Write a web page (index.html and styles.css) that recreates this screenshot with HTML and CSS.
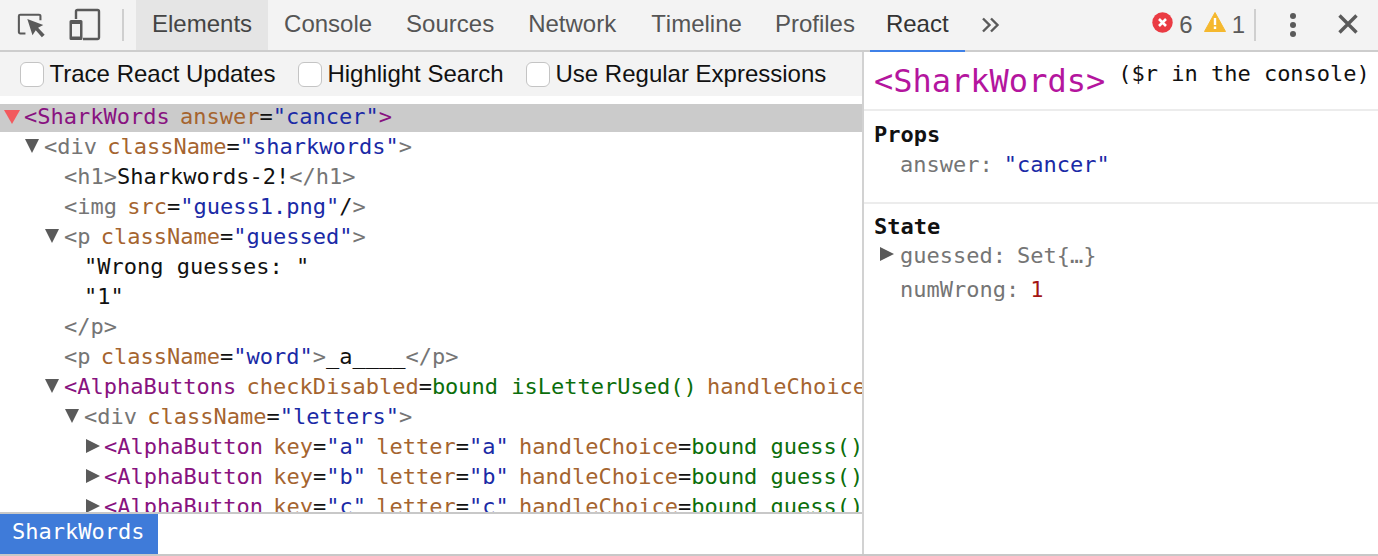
FILE: index.html
```html
<!DOCTYPE html>
<html lang="en">
<head>
<meta charset="utf-8">
<title>DevTools React</title>
<link rel="stylesheet" href="styles.css">
</head>
<body>
<header class="toolbar">
  <button class="tool tool-inspect" aria-label="Inspect">
    <svg width="32" height="32" viewBox="0 0 32 32"><path d="M9 25H3.500A1.500 1.500 0 0 1 2 23.500V6.500A1.500 1.500 0 0 1 3.500 5H23.500A1.500 1.500 0 0 1 25 6.500V11" fill="none" stroke="#5a5a5a" stroke-width="2.200"/><path d="M11 9.500L28 16L22.500 19L29.500 26.500L26.500 29L20 21.500L16.500 27Z" fill="#5a5a5a"/></svg>
  </button>
  <button class="tool tool-device" aria-label="Device">
    <svg width="32" height="34" viewBox="0 0 32 34"><path d="M7 11V3.500A1.500 1.500 0 0 1 8.500 2H28.500A1.500 1.500 0 0 1 30 3.500V29.500A1.500 1.500 0 0 1 28.500 31H14" fill="none" stroke="#5a5a5a" stroke-width="2.400"/><path fill-rule="evenodd" d="M2 12H12A1.500 1.500 0 0 1 13.500 13.500V30.500A1.500 1.500 0 0 1 12 32H2A1.500 1.500 0 0 1 .5 30.500V13.500A1.500 1.500 0 0 1 2 12ZM3 16V28.500H11V16Z" fill="#5a5a5a"/></svg>
  </button>
  <span class="sep"></span>
  <nav class="tabs">
    <span class="tab tab-current">Elements</span>
    <span class="tab tab-console">Console</span>
    <span class="tab">Sources</span>
    <span class="tab tab-network">Network</span>
    <span class="tab">Timeline</span>
    <span class="tab tab-profiles">Profiles</span>
    <span class="tab tab-active">React</span>
    <span class="more">
      <svg width="20" height="16" viewBox="0 0 20 16"><path d="M2 1.500L8.500 8L2 14.500M10 1.500L16.500 8L10 14.500" fill="none" stroke="#5a5a5a" stroke-width="2.400"/></svg>
    </span>
  </nav>
  <div class="status">
    <svg class="ico-err" width="21" height="21" viewBox="0 0 21 21"><circle cx="10.500" cy="10.500" r="10.200" fill="#ea3b43"/><path d="M7 7L14 14M14 7L7 14" stroke="#fff" stroke-width="2.600"/></svg>
    <span class="count count-err">6</span>
    <svg class="ico-warn" width="22" height="20" viewBox="0 0 22 20"><path d="M11 .5L21.500 19.500H.5Z" fill="#f5b82e" stroke="#f5b82e" stroke-linejoin="round"/><path d="M9.800 6H12.200V13H9.800ZM9.800 14.500H12.200V17H9.800Z" fill="#fff"/></svg>
    <span class="count">1</span>
    <span class="sep sep-status"></span>
    <svg class="ico-dots" width="8" height="26" viewBox="0 0 8 26"><circle cx="4" cy="4" r="3" fill="#5a5a5a"/><circle cx="4" cy="13" r="3" fill="#5a5a5a"/><circle cx="4" cy="22" r="3" fill="#5a5a5a"/></svg>
    <svg class="ico-close" width="20" height="20" viewBox="0 0 20 20"><path d="M1.500 1.500L18.500 18.500M18.500 1.500L1.500 18.500" stroke="#5a5a5a" stroke-width="3.400"/></svg>
  </div>
</header>
<main class="panes">
  <section class="left">
    <div class="options">
      <label class="opt"><span class="box"></span>Trace React Updates</label>
      <label class="opt"><span class="box"></span>Highlight Search</label>
      <label class="opt"><span class="box"></span>Use Regular Expressions</label>
    </div>
    <div class="tree">
      <div class="row row-sel i0"><i class="tri tri-down tri-red"></i><b class="t">&lt;SharkWords</b> <b class="a">answer</b>=<b class="v">"cancer"</b><b class="t">&gt;</b></div>
      <div class="row i1"><i class="tri tri-down"></i><b class="g">&lt;div</b> <b class="a">className</b>=<b class="v">"sharkwords"</b><b class="g">&gt;</b></div>
      <div class="row i2"><b class="g">&lt;h1&gt;</b>Sharkwords-2!<b class="g">&lt;/h1&gt;</b></div>
      <div class="row i2"><b class="g">&lt;img</b> <b class="a">src</b>=<b class="v">"guess1.png"</b>/<b class="g">&gt;</b></div>
      <div class="row i2"><i class="tri tri-down"></i><b class="g">&lt;p</b> <b class="a">className</b>=<b class="v">"guessed"</b><b class="g">&gt;</b></div>
      <div class="row i3 plain">"Wrong guesses: "</div>
      <div class="row i3">"1"</div>
      <div class="row i2"><b class="g">&lt;/p&gt;</b></div>
      <div class="row i2"><b class="g">&lt;p</b> <b class="a">className</b>=<b class="v">"word"</b><b class="g">&gt;</b>_a____<b class="g">&lt;/p&gt;</b></div>
      <div class="row i2"><i class="tri tri-down"></i><b class="t">&lt;AlphaButtons</b> <b class="a">checkDisabled</b>=<b class="f">bound isLetterUsed()</b> <b class="a">handleChoice</b>=<b class="f">bound guess()</b></div>
      <div class="row i3"><i class="tri tri-down"></i><b class="g">&lt;div</b> <b class="a">className</b>=<b class="v">"letters"</b><b class="g">&gt;</b></div>
      <div class="row i4"><i class="tri tri-right"></i><b class="t">&lt;AlphaButton</b> <b class="a">key</b>=<b class="v">"a"</b> <b class="a">letter</b>=<b class="v">"a"</b> <b class="a">handleChoice</b>=<b class="f">bound guess()</b></div>
      <div class="row i4"><i class="tri tri-right"></i><b class="t">&lt;AlphaButton</b> <b class="a">key</b>=<b class="v">"b"</b> <b class="a">letter</b>=<b class="v">"b"</b> <b class="a">handleChoice</b>=<b class="f">bound guess()</b></div>
      <div class="row i4"><i class="tri tri-right"></i><b class="t">&lt;AlphaButton</b> <b class="a">key</b>=<b class="v">"c"</b> <b class="a">letter</b>=<b class="v">"c"</b> <b class="a">handleChoice</b>=<b class="f">bound guess()</b></div>
    </div>
    <div class="crumbs"><span class="crumb">SharkWords</span></div>
  </section>
  <aside class="right">
    <div class="head"><span class="head-name">&lt;SharkWords&gt;</span><span class="head-note">($r in the console)</span></div>
    <div class="group group-props">
      <div class="group-title">Props</div>
      <div class="prop"><b class="g">answer:</b> <b class="v">"cancer"</b></div>
    </div>
    <div class="group group-state">
      <div class="group-title">State</div>
      <div class="prop"><i class="tri tri-right tri-prop"></i><b class="g">guessed:</b> <b class="g">Set{…}</b></div>
      <div class="prop prop-num"><b class="g">numWrong:</b> <b class="n">1</b></div>
    </div>
  </aside>
</main>
</body>
</html>
```
FILE: styles.css
```css
* { box-sizing: border-box; }
html, body { margin: 0; height: 100%; }
body {
  width: 1378px;
  height: 556px;
  overflow: hidden;
  display: flex;
  flex-direction: column;
  background: #fff;
  font-family: "Liberation Sans", Arial, sans-serif;
  border-bottom: 2px solid #c8c8c8;
}
b { font-weight: 400; }
i { font-style: normal; }

.toolbar {
  flex: 0 0 52px;
  height: 52px;
  display: flex;
  align-items: stretch;
  background: #f3f3f3;
  border-bottom: 2px solid #cdcdcd;
}
.tool { border: 0; background: none; padding: 0; display: flex; align-items: center; justify-content: center; }
.tool-inspect { margin-left: 17px; width: 30px; }
.tool-device { margin-left: 22px; width: 32px; }
.sep { width: 2px; height: 32px; background: #cfcfcf; align-self: center; }
.toolbar > .sep { margin-left: 21px; margin-right: 12px; }

.tabs { display: flex; align-items: stretch; font-size: 24px; color: #555; font-kerning: none; }
.tab { padding: 0 17px; line-height: 48px; height: 50px; }
.tab-current { background: #e5e5e5; color: #444; padding: 0 16px; }
.tab-console { padding-left: 16px; }
.tab-network { padding-right: 18px; }
.tab-profiles { padding-left: 16px; padding-right: 15px; }
.tab-active { color: #333; border-bottom: 2px solid #3f81e8; height: 52px; padding: 0 16px; }
.more { display: flex; align-items: center; margin-left: 16px; height: 50px; }

.status { margin-left: auto; display: flex; align-items: center; height: 50px; font-size: 24px; color: #5a5a5a; padding-right: 20px; }
.count { margin-left: 6px; }
.count-err { margin-right: 11px; }
.ico-err, .ico-warn { display: block; margin-top: -6px; }
.sep-status { margin-left: 9px; }
.ico-dots { margin-left: 33px; }
.ico-close { margin-left: 41px; margin-top: -2px; }

.panes { flex: 1; min-height: 0; display: flex; }
.left { flex: 0 0 864px; width: 864px; display: flex; flex-direction: column; border-right: 2px solid #d2d2d2; }
.options { flex: 0 0 44px; display: flex; align-items: center; gap: 22.500px; padding-left: 20px; background: #f3f3f3; font-size: 24px; color: #111; }
.opt { display: flex; align-items: center; }
.box { width: 24px; height: 25px; margin-right: 5.500px; background: #fff; border: 1.500px solid #c4c4c4; border-radius: 6px; }

.tree { flex: 1; min-height: 0; overflow: hidden; padding-top: 8px; font-family: "DejaVu Sans Mono", "Liberation Mono", monospace; font-size: 22px; word-spacing: -3px; color: #111; }
.row { position: relative; height: 30px; line-height: 26px; white-space: nowrap; overflow: hidden; }
.row-sel { background: #cbcbcb; height: 28px; margin-bottom: 2px; }
.plain { word-spacing: 0; }
.i0 { padding-left: 24px; }
.i1 { padding-left: 44px; }
.i2 { padding-left: 64px; }
.i3 { padding-left: 84px; }
.i4 { padding-left: 104px; }

.tri { position: absolute; top: 5px; width: 0; height: 0; }
.tri-down { margin-left: -19px; border-left: 7.500px solid transparent; border-right: 7.500px solid transparent; border-top: 14px solid #5a5a5a; }
.tri-red { top: 6px; margin-left: -20px; border-left-width: 8px; border-right-width: 8px; border-top-color: #f25a5e; }
.tri-right { margin-left: -18px; top: 5px; border-top: 7.500px solid transparent; border-bottom: 7.500px solid transparent; border-left: 14px solid #5a5a5a; }

.t { color: #881280; }
.a { color: #a5642f; }
.v { color: #1a2aa6; }
.g { color: #757575; }
.f { color: #0b6e0b; word-spacing: 0; }
.n { color: #a31515; }

.crumbs { flex: 0 0 42px; height: 42px; border-top: 2px solid #c8c8c8; font-family: "DejaVu Sans Mono", monospace; font-size: 22px; background: #fff; }
.crumb { display: inline-block; height: 40px; width: 158px; padding-left: 12px; line-height: 36px; color: #fff; background: #3f7bd9; }

.right { flex: 1; min-width: 0; font-family: "DejaVu Sans Mono", monospace; font-size: 22px; word-spacing: -2.200px; }
.head { height: 59px; padding-left: 10px; display: flex; align-items: flex-start; border-bottom: 2px solid #ececec; padding-top: 8px; white-space: nowrap; }
.head-name { font-size: 32px; color: #b4159e; line-height: 42px; }
.head-note { margin-left: 13px; color: #111; line-height: 28px; word-spacing: 0; }
.group { padding-left: 10px; }
.group-props { height: 93px; border-bottom: 2px solid #ececec; padding-top: 10px; }
.group-state { padding-top: 9px; }
.group-title { font-weight: 700; color: #111; line-height: 28px; }
.prop { position: relative; padding-left: 26px; line-height: 30px; }
.group-props .prop { line-height: 32px; }
.tri-prop { left: 6px; margin-left: 0; top: 6px; }
.prop-num { margin-top: 4px; }
```
